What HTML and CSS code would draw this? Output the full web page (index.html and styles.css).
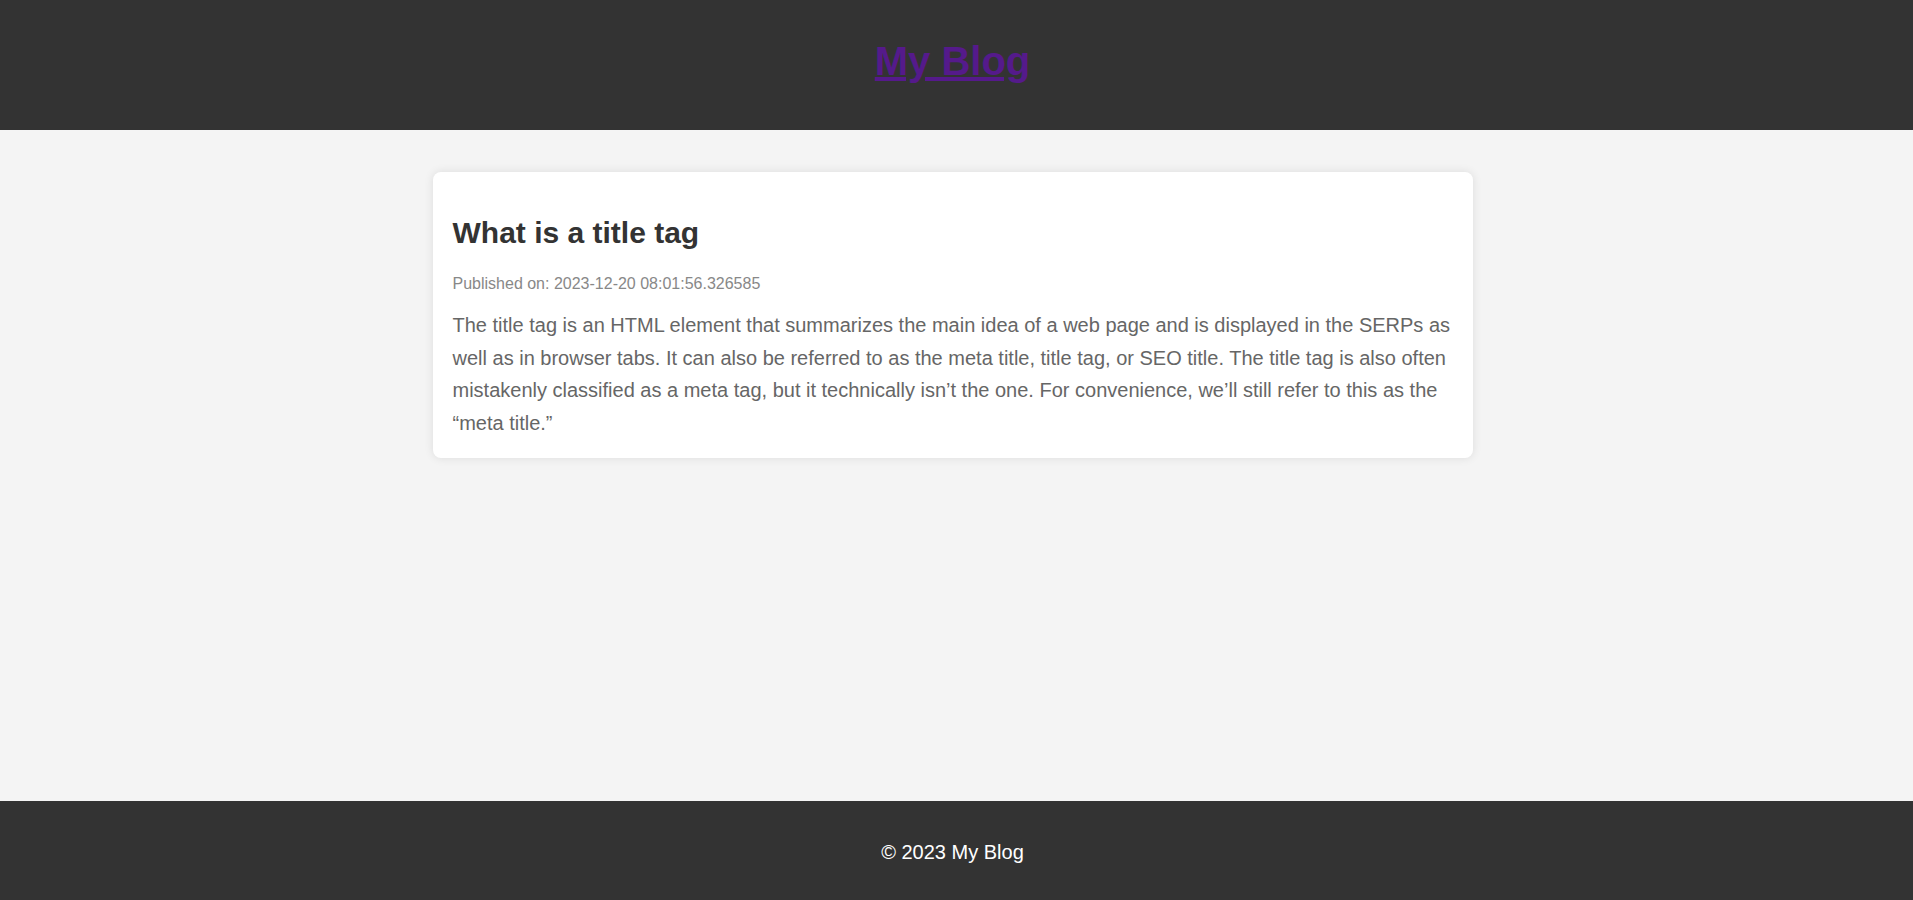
FILE: index.html
```html
<!DOCTYPE html>
<html lang="en">
<head>
<meta charset="utf-8">
<title>My Blog</title>
<link rel="stylesheet" href="styles.css">
</head>
<body>
<header class="site-header">
  <h1 class="site-title"><a href="#">My Blog</a></h1>
</header>
<main class="content">
  <article class="post">
    <h2 class="post-title">What is a title tag</h2>
    <p class="post-date">Published on: 2023-12-20 08:01:56.326585</p>
    <p class="post-body">The title tag is an HTML element that summarizes the main idea of a web page and is displayed in the SERPs as well as in browser tabs. It can also be referred to as the meta title, title tag, or SEO title. The title tag is also often mistakenly classified as a meta tag, but it technically isn’t the one. For convenience, we’ll still refer to this as the “meta title.”</p>
  </article>
</main>
<footer class="site-footer">
  <p class="footer-text">© 2023 My Blog</p>
</footer>
</body>
</html>
```
FILE: styles.css
```css
html, body {
  margin: 0;
  padding: 0;
}
body {
  font-family: "Liberation Sans", Arial, sans-serif;
  background: #f4f4f4;
  color: #333;
  min-height: 100vh;
  display: flex;
  flex-direction: column;
}
.site-header {
  background: #333;
  height: 130px;
  box-sizing: border-box;
  padding: 38px 8px 0 0;
  text-align: center;
}
.site-title {
  margin: 0;
  font-size: 40px;
  line-height: 46px;
  font-weight: bold;
}
.site-title a {
  color: #551a8b;
  text-decoration: underline;
}
.content {
  flex: 1;
  padding: 42px 8px 0 0;
}
.post {
  width: 1040px;
  box-sizing: border-box;
  margin: 0 auto;
  background: #fff;
  border-radius: 8px;
  box-shadow: 0 0 10px rgba(0, 0, 0, 0.1);
  padding: 44px 20px 19px;
}
.post-title {
  margin: 0;
  font-size: 30px;
  line-height: 34px;
  color: #333;
}
.post-date {
  margin: 25px 0 0;
  font-size: 16px;
  line-height: 18px;
  color: #888;
}
.post-body {
  margin: 16px 0 0;
  font-size: 20px;
  line-height: 32.6px;
  color: #666;
}
.site-footer {
  background: #333;
  height: 99px;
  box-sizing: border-box;
  padding: 40px 8px 0 0;
  text-align: center;
}
.footer-text {
  margin: 0;
  color: #fff;
  font-size: 20px;
  line-height: 22px;
}
```
